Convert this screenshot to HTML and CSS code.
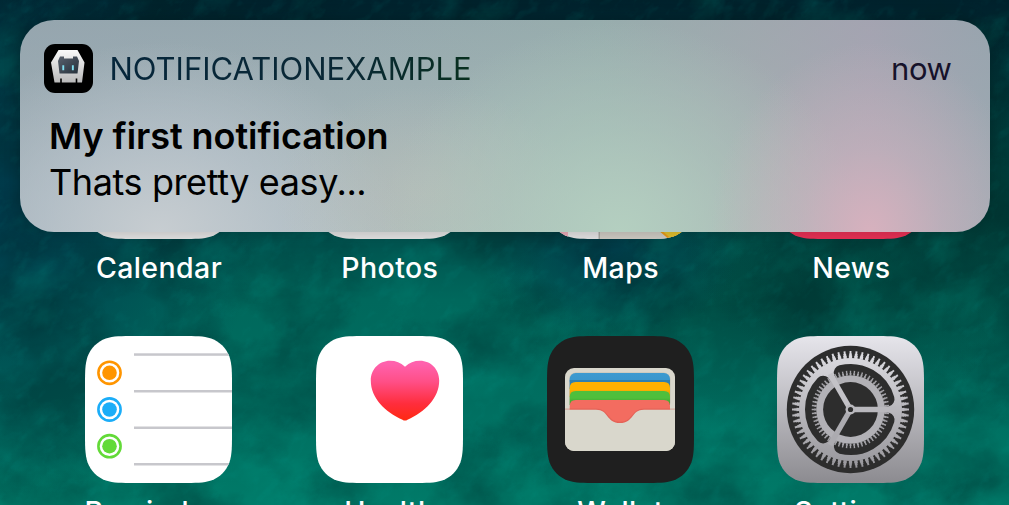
FILE: index.html
```html
<!DOCTYPE html>
<html lang="en">
<head>
<meta charset="utf-8">
<title>Home screen</title>
<link rel="stylesheet" href="styles.css">
</head>
<body>
<main class="screen">
  <svg class="texture" width="1009" height="505" aria-hidden="true">
    <filter id="clouds" x="0" y="0" width="100%" height="100%" color-interpolation-filters="sRGB">
      <feTurbulence type="fractalNoise" baseFrequency="0.009 0.012" numOctaves="7" seed="8"/>
      <feColorMatrix values="0 0 0 0 0  0 0 0 0 0.12  0 0 0 0 0.13  0 3 0 0 -1.2"/>
    </filter>
    <filter id="foam" x="0" y="0" width="100%" height="100%" color-interpolation-filters="sRGB">
      <feTurbulence type="fractalNoise" baseFrequency="0.014 0.022" numOctaves="7" seed="21"/>
      <feColorMatrix values="0 0 0 0 0  0 0 0 0 0.62  0 0 0 0 0.54  3 0 0 0 -1.5"/>
    </filter>
    <filter id="grain" x="0" y="0" width="100%" height="100%" color-interpolation-filters="sRGB">
      <feTurbulence type="fractalNoise" baseFrequency="0.05 0.09" numOctaves="5" seed="4"/>
      <feColorMatrix values="0 0 0 0 0.03  0 0 0 0 0.68  0 0 0 0 0.63  3 0 0 0 -1.6"/>
    </filter>
    <rect width="1009" height="505" filter="url(#clouds)" opacity=".34"/>
    <g transform="rotate(-40 504 252)">
      <rect x="-200" y="-400" width="1400" height="1300" filter="url(#foam)" opacity=".2"/>
      <rect x="-200" y="-400" width="1400" height="1300" filter="url(#grain)" opacity=".09"/>
    </g>
  </svg>

  <div class="apps">
    <div class="app">
      <svg class="icon" viewBox="0 0 147 147"><use href="#tile" fill="#e2e2e2"/></svg>
      <span class="label">Calendar</span>
    </div>
    <div class="app">
      <svg class="icon" viewBox="0 0 147 147"><use href="#tile" fill="#e2e2e2"/></svg>
      <span class="label">Photos</span>
    </div>
    <div class="app">
      <svg class="icon" viewBox="0 0 147 147">
        <g clip-path="url(#tileClip)">
          <path fill="#e2e2e2" d="M0 0h147v147H0z"/>
          <path fill="#eaacb8" d="M0 100h21v47H0z"/>
          <path fill="#cecbc3" d="M52 100h95v47H52z"/>
          <path fill="#aaa8a2" d="M51.500 100h1.500v47h-1.500z"/>
          <path fill="#e99b18" d="M92 122 L124 149 H147 V122z"/>
          <path fill="#e2c02e" d="M100 126 L127 149 H147 V122z"/>
        </g>
      </svg>
      <span class="label">Maps</span>
    </div>
    <div class="app">
      <svg class="icon" viewBox="0 0 147 147"><use href="#tile" fill="#e83155"/></svg>
      <span class="label">News</span>
    </div>

    <div class="app">
      <svg class="icon" viewBox="0 0 147 147">
        <defs>
          <path id="tile" d="M50.400 0H96.600C111.100 0 118.300 0 126.200 2.500C134.700 5.600 141.400 12.300 144.500 20.800C147 28.700 147 35.900 147 50.400V96.600C147 111.100 147 118.300 144.500 126.200C141.400 134.700 134.700 141.400 126.200 144.500C118.300 147 111.100 147 96.600 147H50.400C35.900 147 28.700 147 20.800 144.500C12.300 141.400 5.600 134.700 2.500 126.200C0 118.300 0 111.100 0 96.600V50.400C0 35.900 0 28.700 2.500 20.800C5.600 12.300 12.300 5.600 20.800 2.500C28.700 0 35.900 0 50.400 0Z"/>
          <clipPath id="tileClip"><use href="#tile"/></clipPath>
        </defs>
        <use href="#tile" fill="#fff"/>
        <g clip-path="url(#tileClip)" fill="#c7c7cc">
          <rect x="49" y="17.300" width="98" height="2.500"/>
          <rect x="49" y="54" width="98" height="2.500"/>
          <rect x="49" y="90.500" width="98" height="2.500"/>
          <rect x="49" y="127" width="98" height="2.500"/>
        </g>
        <g fill="none" stroke-width="2.600">
          <circle cx="24.500" cy="36.800" r="11.100" stroke="#ff9500"/>
          <circle cx="24.500" cy="73.500" r="11.100" stroke="#1badf8"/>
          <circle cx="24.500" cy="110.200" r="11.100" stroke="#63da38"/>
        </g>
        <circle cx="24.500" cy="36.800" r="7.300" fill="#ff9500"/>
        <circle cx="24.500" cy="73.500" r="7.300" fill="#1badf8"/>
        <circle cx="24.500" cy="110.200" r="7.300" fill="#63da38"/>
      </svg>
      <span class="label">Reminders</span>
    </div>
    <div class="app">
      <svg class="icon" viewBox="0 0 147 147">
        <defs>
          <linearGradient id="heart" x1="0" y1="0" x2="0" y2="1">
            <stop offset=".05" stop-color="#ff61ad"/>
            <stop offset=".35" stop-color="#ff4f87"/>
            <stop offset=".72" stop-color="#ff2d3c"/>
            <stop offset="1" stop-color="#ff2912"/>
          </linearGradient>
        </defs>
        <use href="#tile" fill="#fff"/>
        <path fill="url(#heart)" d="M89 30.700C84.500 26.800 80 24.800 74 24.800C63 24.800 54.800 33.500 54.800 44.500C54.800 62 69 76 86.500 83.700Q89 85.400 91.500 83.700C109 76 123.200 62 123.200 44.500C123.200 33.500 115 24.800 104 24.800C98 24.800 93.500 26.800 89 30.700Z"/>
      </svg>
      <span class="label">Health</span>
    </div>
    <div class="app">
      <svg class="icon" viewBox="0 0 147 147">
        <defs>
          <linearGradient id="blue" x1="0" y1="0" x2="0" y2="1"><stop stop-color="#3c9ad0"/><stop offset=".6" stop-color="#3996cc"/><stop offset="1" stop-color="#2d77a5"/></linearGradient>
          <linearGradient id="amber" x1="0" y1="0" x2="0" y2="1"><stop offset=".5" stop-color="#ffb000"/><stop offset="1" stop-color="#d99500"/></linearGradient>
          <linearGradient id="green" x1="0" y1="0" x2="0" y2="1"><stop offset=".5" stop-color="#4fbf3c"/><stop offset="1" stop-color="#399329"/></linearGradient>
          <clipPath id="wallet"><rect x="18" y="32" width="110" height="83" rx="9"/></clipPath>
        </defs>
        <use href="#tile" fill="#1f1f1f"/>
        <g clip-path="url(#wallet)">
          <path fill="#d9d7cc" d="M18 32h110v83H18z"/>
          <rect x="22" y="36.500" width="101.500" height="37" rx="7" fill="#b9b8ad" opacity=".7"/>
          <rect x="22.700" y="37" width="100.300" height="14" rx="6" fill="url(#blue)"/>
          <path fill="#2f7fb0" d="M22.700 44h100.300v9H22.700z"/>
          <path fill="url(#amber)" d="M22.700 61V52q0-6 6-6h88.300q6 0 6 6v9z"/>
          <path fill="url(#green)" d="M22.700 69V61q0-6 6-6h88.300q6 0 6 6v8z"/>
          <path fill="#f36c60" d="M22.700 92V70q0-6 6-6h88.300q6 0 6 6v22z"/>
          <path fill="none" stroke="#c95147" stroke-opacity=".35" stroke-width="1.500" d="M18 73.300H49C62 73.300 59 86.500 73 86.500S84 73.300 97 73.300H128"/>
          <path fill="#d9d7cc" d="M18 73.700H49C62 73.700 59 87 73 87S84 73.700 97 73.700H128V116H18z"/>
        </g>
      </svg>
      <span class="label">Wallet</span>
    </div>
    <div class="app">
      <svg class="icon" viewBox="0 0 147 147">
        <defs>
          <linearGradient id="steel" x1="0" y1="0" x2="0" y2="1"><stop stop-color="#e6e5eb"/><stop offset="1" stop-color="#8c8b90"/></linearGradient>
          <linearGradient id="cog" gradientUnits="userSpaceOnUse" x1="0" y1="-58" x2="0" y2="58"><stop stop-color="#dddce1"/><stop offset=".5" stop-color="#b9b8bd"/><stop offset="1" stop-color="#98979c"/></linearGradient>
          <path id="slot" d="M36.500 -10.500A38 38 0 0 0 -9.200 -36.900"/>
        </defs>
        <use href="#tile" fill="url(#steel)"/>
        <g transform="translate(73.500 73.500)">
          <circle r="63.700" fill="#2d2d2d"/>
          <circle r="51.500" fill="url(#cog)"/>
          <g fill="none" stroke="url(#cog)">
            <circle r="52.500" stroke-width="3" pathLength="600" stroke-dasharray="6.200 3.800" stroke-dashoffset="3.100"/>
            <circle r="54.500" stroke-width="3" pathLength="600" stroke-dasharray="4.800 5.200" stroke-dashoffset="2.400"/>
            <circle r="57" stroke-width="3" pathLength="600" stroke-dasharray="3.200 6.800" stroke-dashoffset="1.600"/>
          </g>
          <g fill="none" stroke="#2d2d2d" stroke-width="15" stroke-linecap="round">
            <use href="#slot"/>
            <use href="#slot" transform="rotate(120)"/>
            <use href="#slot" transform="rotate(240)"/>
          </g>
          <circle r="34.300" fill="#b2b1b6"/>
          <g fill="none" stroke="#a4a3a8">
            <circle r="35.200" stroke-width="2.400" pathLength="600" stroke-dasharray="5.200 4.800" stroke-dashoffset="2.600"/>
            <circle r="37.400" stroke-width="2.800" pathLength="600" stroke-dasharray="3.600 6.400" stroke-dashoffset="1.800"/>
          </g>
          <circle r="27.400" fill="#2d2d2d"/>
          <path stroke="#b9b8bd" stroke-width="5.400" d="M0 0H46"/>
          <path stroke="#c3c2c7" stroke-width="5.400" d="M0 0H41" transform="rotate(240)"/>
          <path stroke="#acabb0" stroke-width="5.400" d="M0 0H41" transform="rotate(120)"/>
          <circle r="5" fill="#b9b8bd"/>
          <circle r="2.600" fill="#2d2d2d"/>
        </g>
      </svg>
      <span class="label">Settings</span>
    </div>
  </div>

  <section class="notification">
    <header class="head">
      <svg class="app-badge" viewBox="0 0 49 49">
        <defs>
          <linearGradient id="shell" x1="0" y1="0" x2="0" y2="1"><stop stop-color="#fafafa"/><stop offset="1" stop-color="#b9b9ba"/></linearGradient>
          <linearGradient id="visor" x1="0" y1="0" x2="1" y2="1"><stop stop-color="#59616d"/><stop offset="1" stop-color="#25303b"/></linearGradient>
        </defs>
        <rect width="49" height="49" rx="11" fill="#000"/>
        <path fill="url(#shell)" d="M14.500 6H33.500L40.500 18.500L38 38.500H33.300V34.500H31.700V38.500H17.800V34.500H16.200V38.500H10.500L7 18.500z"/>
        <path fill="url(#visor)" d="M16 12.500H20V14.500H29V12.500H33L35 17L33.500 29.500H15.500L14 17z"/>
        <path fill="#81dff0" d="M18.300 21.300h1.900v4.900h-1.900zM27.900 21.300h1.900v4.900h-1.900z"/>
      </svg>
      <span class="app-name">NOTIFICATIONEXAMPLE</span>
      <time class="time">now</time>
    </header>
    <h1 class="title">My first notification</h1>
    <p class="message">Thats pretty easy...</p>
  </section>
</main>
</body>
</html>
```
FILE: styles.css
```css
* { box-sizing: border-box; }

body {
  margin: 0;
  font-family: Inter, "Liberation Sans", sans-serif;
}

.screen {
  position: relative;
  width: 1009px;
  height: 505px;
  overflow: hidden;
  background:
    radial-gradient(ellipse 260px 300px at 0 200px, #00394a 0%, rgba(0, 57, 74, 0) 100%),
    radial-gradient(ellipse 130px 90px at 610px 250px, rgba(0, 58, 77, .8), rgba(0, 58, 77, 0)),
    radial-gradient(ellipse 330px 200px at 1009px 220px, rgba(0, 58, 52, .8), rgba(0, 58, 52, 0)),
    radial-gradient(ellipse 260px 130px at 760px 300px, rgba(0, 58, 52, .65), rgba(0, 58, 52, 0)),
    linear-gradient(#00222d 0, #003036 90px, #004e4c 225px, #00685c 300px, #006e60 400px, #007a68 505px);
}

.texture {
  position: absolute;
  inset: 0;
}

.apps {
  position: relative;
  display: grid;
  grid-template-columns: repeat(4, 147px);
  column-gap: 83.800px;
  row-gap: 51px;
  padding: 92px 0 0 85px;
}

.app {
  display: flex;
  flex-direction: column;
  align-items: center;
  gap: 10px;
  height: 193px;
}

.icon {
  display: block;
  flex: none;
  width: 147px;
  height: 147px;
}

.label {
  color: #fff;
  font-size: 28.500px;
  font-weight: 500;
  line-height: 38px;
  letter-spacing: .4px;
  margin-left: 1px;
  white-space: nowrap;
}

.notification {
  position: absolute;
  top: 20px;
  left: 20px;
  width: 969.500px;
  height: 211.500px;
  padding: 24px 38px 0 24px;
  border-radius: 34px;
  box-shadow: 0 0 16px rgba(0, 0, 0, .22);
  background:
    radial-gradient(ellipse 160px 190px at 850px 212px, #d7b1be 0%, rgba(205, 178, 190, .55) 45%, rgba(190, 177, 190, 0) 100%),
    radial-gradient(ellipse 240px 210px at 600px 212px, #b4cfc0 0%, rgba(176, 204, 190, .5) 50%, rgba(165, 190, 180, 0) 100%),
    radial-gradient(ellipse 150px 110px at 405px 175px, rgba(187, 190, 184, .6), rgba(185, 190, 182, 0)),
    radial-gradient(ellipse 240px 190px at 140px 212px, #c7cdd1 0%, rgba(187, 197, 206, .65) 50%, rgba(174, 185, 194, 0) 100%),
    linear-gradient(90deg, rgba(150, 164, 175, .5) 0, rgba(155, 170, 176, 0) 300px, rgba(155, 182, 172, .4) 580px, rgba(166, 168, 174, .6) 740px, rgba(170, 162, 178, .7) 850px, rgba(153, 163, 174, .7) 970px),
    linear-gradient(#95a7ae, #b0bebf);
}

.head {
  display: flex;
  align-items: center;
  height: 49px;
}

.app-badge {
  flex: none;
  width: 49px;
  height: 49px;
  margin-right: 16.500px;
}

.app-name {
  margin-top: 1px;
  color: transparent;
  background: linear-gradient(90deg, #06263b, #0a2835 65%, #08301f);
  background-clip: text;
  -webkit-background-clip: text;
  font-size: 31px;
  line-height: 40px;
  letter-spacing: -.02px;
}

.time {
  margin: 1px 0 0 auto;
  color: #16122a;
  font-size: 31px;
  line-height: 40px;
  letter-spacing: -.4px;
}

.title,
.message {
  margin: 0 0 0 5px;
  color: #000;
  font-size: 36px;
  line-height: 46px;
}

.title {
  margin-top: 20px;
  font-weight: 600;
  letter-spacing: -.070px;
}

.message {
  font-weight: 400;
  letter-spacing: -.4px;
}
```
